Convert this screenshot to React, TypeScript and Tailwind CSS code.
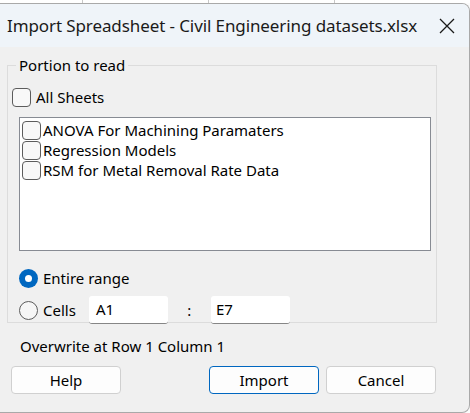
import React from "react";

const font = { fontFamily: '"Segoe UI", "Noto Sans", "Open Sans", sans-serif' };

function Check({ className = "" }: { className?: string }) {
  return (
    <span
      className={
        "inline-block w-[19px] h-[19px] rounded-[4px] border border-[#5c5c5c] bg-[#f8f8f8] shrink-0 " +
        className
      }
    />
  );
}

export default function App() {
  return (
    <div className="w-[470px] h-[413px] bg-[#fbfbfb] flex flex-col overflow-hidden" style={font}>
      <div className="h-[3px] flex shrink-0 bg-white">
        <div className="w-[83px] border-r border-[#c8c8c8]" />
        <div className="w-[126px] border-r border-[#c8c8c8]" />
        <div className="w-[126px] border-r border-[#c8c8c8]" />
        <div className="flex-1" />
      </div>
      <div className="flex-1 flex flex-col bg-[#f0f0f0] border-t border-r border-b border-[#a9a9a9] rounded-tr-[8px] rounded-br-[8px] overflow-hidden">
        <div className="h-[43px] shrink-0 bg-[#eff4f9] flex items-center pl-[7px] pr-[14px] text-[#1a1a1a]">
          <span className="text-[17px] whitespace-nowrap tracking-[-0.1px]">Import Spreadsheet - Civil Engineering datasets.xlsx</span>
          <span className="ml-auto">
            <svg width="16" height="16" viewBox="0 0 16 16" fill="none" stroke="#1a1a1a" strokeWidth="1.3">
              <path d="M1 1 L15 15 M15 1 L1 15" />
            </svg>
          </span>
        </div>
        <div className="flex-1 flex flex-col px-[7px] pt-[9px] text-[15px] text-black">
          <fieldset className="relative border border-[#dcdcdc] w-[430px] h-[267px] px-[4px] pt-[17px]">
            <legend className="ml-[4px] px-[3px] leading-[18px] -mb-[4px]">Portion to read</legend>
            <div className="flex items-center gap-[5px] h-[20px]">
              <Check />
              <span>All Sheets</span>
            </div>
            <div className="mt-[10px] ml-[7px] w-[412px] h-[134px] bg-white border border-[#878b93] pt-[2px] pl-[2px]">
              {["ANOVA For Machining Paramaters", "Regression Models", "RSM for Metal Removal Rate Data"].map((t) => (
                <div key={t} className="flex items-center h-[20px] gap-[2px]">
                  <Check />
                  <span className="leading-[20px]">{t}</span>
                </div>
              ))}
            </div>
            <div className="mt-[17px] ml-[7px] flex items-center h-[20px] gap-[5px]">
              <span className="w-[19px] h-[19px] rounded-full bg-[#0067c0] flex items-center justify-center">
                <span className="w-[7px] h-[7px] rounded-full bg-white" />
              </span>
              <span>Entire range</span>
            </div>
            <div className="mt-[8px] ml-[7px] flex items-center h-[28px] gap-[5px]">
              <span className="w-[19px] h-[19px] rounded-full border border-[#5c5c5c] bg-[#f6f6f6]" />
              <span>Cells</span>
              <div className="ml-[8px] w-[79px] h-[28px] bg-white border-b border-[#868686] rounded-[3px] flex items-center px-[7px]">A1</div>
              <span className="w-[33px] text-center">:</span>
              <div className="w-[79px] h-[28px] bg-white border-b border-[#868686] rounded-[3px] flex items-center px-[5px]">E7</div>
            </div>
          </fieldset>
          <div className="mt-[13px] ml-[13px] leading-[20px]">Overwrite at Row 1 Column 1</div>
          <div className="mt-[10px] flex ml-[4px]">
            <button className="w-[110px] h-[28px] bg-[#fdfdfd] border border-[#d0d0d0] rounded-[4px]">Help</button>
            <button className="ml-[88px] w-[110px] h-[28px] bg-[#fdfdfd] border border-[#0067c0] rounded-[4px]">Import</button>
            <button className="ml-[7px] w-[110px] h-[28px] bg-[#fdfdfd] border border-[#d0d0d0] rounded-[4px]">Cancel</button>
          </div>
        </div>
      </div>
    </div>
  );
}
